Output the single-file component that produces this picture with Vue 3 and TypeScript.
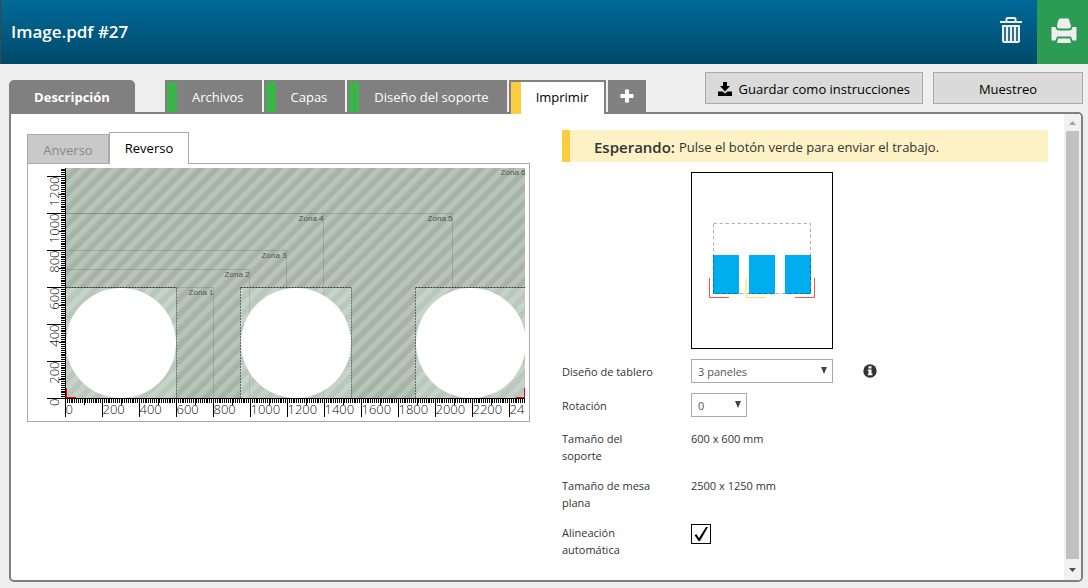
<script setup lang="ts">
import { ref } from 'vue'

type Status = 'done' | 'pending'
interface StepTab { label: string; status: Status }

const steps: StepTab[] = [
  { label: 'Archivos', status: 'done' },
  { label: 'Capas', status: 'done' },
  { label: 'Diseño del soporte', status: 'done' },
  { label: 'Imprimir', status: 'pending' },
]
const activeStep = ref('Imprimir')
const side = ref('Reverso')
const layout = ref('3 paneles')
const rotation = ref('0')
const autoAlign = ref(true)

// Bed geometry: millimetres to drawing units
const scale = 0.185
const originX = 65.5
const originY = 398.5
const px = (mm: number) => Math.floor(originX + mm * scale) + 0.5
const py = (mm: number) => Math.ceil(originY - mm * scale) - 0.5

const range = (max: number, step: number) =>
  Array.from({ length: Math.floor(max / step) + 1 }, (_, i) => i * step)
const tick = (mm: number, major: number, mid: number, minor: number) =>
  mm % 200 === 0 ? major : mm % 100 === 0 ? mid : minor

const xTicks = range(2480, 10).map(mm => `M${px(mm)} 398V${tick(mm, 417, 405, 403)}`).join('')
const yTicks = range(1240, 10).map(mm => `M66 ${py(mm)}H${tick(mm, 47, 59, 61)}`).join('')
// The last label has room for two digits only before the ruler ends
const xLabels = range(2400, 200).map(mm => ({ mm, text: mm === 2400 ? '24' : String(mm) }))
const yLabels = range(1200, 200)

const zones = [
  { name: 'Zona 1', x: 213.5, y: 287.5 },
  { name: 'Zona 2', x: 249.5, y: 269.5 },
  { name: 'Zona 3', x: 286.5, y: 250.5 },
  { name: 'Zona 4', x: 323.5, y: 213.5 },
  { name: 'Zona 5', x: 452.5, y: 213.5 },
  { name: 'Zona 6', x: 525.5, y: 167.5 },
]
const media = [65.5, 240.5, 415.5]
</script>

<template>
  <div class="app">
    <header class="topbar">
      <h1>Image.pdf #27</h1>
      <button class="icon-btn" type="button" aria-label="Eliminar">
        <svg width="24" height="28" viewBox="0 0 24 28" fill="none" stroke="#eee">
          <path d="M1 6H23" stroke-width="2" />
          <path d="M7.5 5V2.8Q7.5 2 8.5 2H15.5Q16.5 2 16.5 2.8V5" stroke-width="2" />
          <path d="M3 9H21V25Q21 27 19 27H5Q3 27 3 25Z" fill="#eee" stroke="none" />
          <path d="M6 11V25M10 11V25M14 11V25M18 11V25" stroke="#00527d" stroke-width="1.6" />
        </svg>
      </button>
      <button class="icon-btn print" type="button" aria-label="Imprimir trabajo">
        <svg width="26" height="26" viewBox="0 0 26 26" fill="#eee">
          <path d="M8.500 0.500H17.500L18.500 3L20 8Q20 10.500 18 10.500H8Q6 10.500 6 8L7 3Z" />
          <path d="M0.500 9H4.500Q5 12.500 8 12.500H18Q21 12.500 21.500 9H25.500V22.500H21.500L20 18.500H6L4.500 22.500H0.500Z" />
          <path d="M7 20.500H19L20 25H6Z" />
        </svg>
      </button>
    </header>

    <div class="toolbar">
      <nav class="tabs">
        <button class="tab overview" type="button">Descripción</button>
        <button
          v-for="s in steps" :key="s.label" type="button" class="tab step"
          :class="[s.status, { active: s.label === activeStep }]"
          @click="activeStep = s.label"
        >{{ s.label }}</button>
        <button class="tab add" type="button" aria-label="Añadir">
          <svg width="14" height="14" viewBox="0 0 14 14"><path d="M7 0.500V13.500M0.500 7H13.500" stroke="#fff" stroke-width="4" /></svg>
        </button>
      </nav>
      <div class="actions">
        <button class="action save" type="button">
          <svg width="14" height="14" viewBox="0 0 14 14"><path d="M5 0H9V4H12L7 9.500L2 4H5Z" /><path d="M0 9.500H4.500L7 11.500L9.500 9.500H14V14H0Z" /></svg>
          <span>Guardar como instrucciones</span>
        </button>
        <button class="action sample" type="button">Muestreo</button>
      </div>
    </div>

    <main class="panel">
      <div class="content">
        <section class="preview">
          <div class="side-tabs">
            <button
              v-for="s in ['Anverso', 'Reverso']" :key="s" type="button" class="side-tab"
              :class="{ active: s === side }" @click="side = s"
            >{{ s }}</button>
          </div>
          <div class="board">
            <svg viewBox="28 164 501 257" role="img" aria-label="Mesa de impresión">
              <defs>
                <pattern id="hatch" width="11" height="11" patternUnits="userSpaceOnUse" patternTransform="rotate(45)">
                  <rect width="11" height="11" fill="#a8b3a8" />
                  <rect width="5.500" height="11" fill="#b8c4b9" />
                </pattern>
                <clipPath id="bed"><rect x="65" y="168" width="460" height="231" /></clipPath>
              </defs>
              <g clip-path="url(#bed)">
                <rect x="65" y="168" width="460" height="231" fill="url(#hatch)" />
                <g v-for="z in zones" :key="z.name">
                  <path :d="`M65 ${z.y}H${z.x}V398`" fill="none" stroke="#4f5d52" stroke-opacity="0.25" />
                  <text class="zone" :x="z.x" :y="z.y + 7.500" text-anchor="end">{{ z.name }}</text>
                </g>
                <g v-for="x in media" :key="x">
                  <rect :x="x" y="287.500" width="111" height="111" fill="#e6f5ea" fill-opacity="0.3" />
                  <path :d="`M${x} 398V287.500M${x + 111} 287.500V398`" stroke="#444" stroke-opacity="0.7" stroke-dasharray="2 1" />
                  <path :d="`M${x} 287.500H${x + 111}`" stroke="#333" stroke-dasharray="2 1" />
                  <circle :cx="x + 55.500" cy="343" r="55" fill="#fff" />
                </g>
                <path d="M66.500 388V397.500H76M524.500 388V397.500H516" fill="none" stroke="#f00" />
              </g>
              <path d="M65.500 168V399M65 398.500H525" stroke="#000" />
              <path :d="xTicks" stroke="#000" />
              <path :d="yTicks" stroke="#000" />
              <text v-for="l in xLabels" :key="l.mm" class="scale" :x="px(l.mm)" y="414">{{ l.text }}</text>
              <text
                v-for="v in yLabels" :key="v" class="scale" text-anchor="end"
                :transform="`translate(59 ${py(v)}) rotate(-90)`"
              >{{ v }}</text>
            </svg>
          </div>
        </section>

        <section class="settings">
          <p class="notice"><strong>Esperando:</strong> Pulse el botón verde para enviar el trabajo.</p>
          <svg class="sheet" width="142" height="177" viewBox="0 0 142 177" fill="none" role="img" aria-label="Diseño de 3 paneles">
            <rect x="0.500" y="0.500" width="141" height="176" stroke="#000" fill="#fff" />
            <path d="M22 83H48V122H22ZM58 83H84V122H58ZM94 83H120V122H94Z" fill="#00aeef" />
            <rect x="22.500" y="51.500" width="97" height="70" stroke="#000" stroke-opacity="0.3" stroke-dasharray="3.500 2.500" />
            <path d="M18.500 106V125.500H38M104 125.500H123.500V106" stroke="#ff5050" />
            <path d="M55 106V125" stroke="#ffe9a0" stroke-width="2" />
            <path d="M55 125.500H75" stroke="#ffd966" />
          </svg>
          <div class="fields">
            <div class="row">
              <label for="layout">Diseño de tablero</label>
              <span class="select wide"><select id="layout" v-model="layout"><option>3 paneles</option></select></span>
              <svg class="info" width="14" height="14" viewBox="0 0 14 14"><circle cx="7" cy="7" r="6.700" fill="#333" /><path d="M5.500 2.300H8.500V4.600H5.500ZM4.800 5.600H8.500V9.600H9.400V11.200H4.800V9.600H5.700V7.200H4.800Z" fill="#fff" /></svg>
            </div>
            <div class="row">
              <label for="rotation">Rotación</label>
              <span class="select"><select id="rotation" v-model="rotation"><option>0</option><option>90</option></select></span>
            </div>
          </div>
          <div class="fields facts">
            <div class="row"><span class="name">Tamaño del soporte</span><span>600 x 600 mm</span></div>
            <div class="row"><span class="name">Tamaño de mesa plana</span><span>2500 x 1250 mm</span></div>
            <div class="row">
              <label for="align">Alineación automática</label>
              <span class="check">
                <input id="align" v-model="autoAlign" type="checkbox">
                <svg v-if="autoAlign" width="20" height="20" viewBox="0 0 20 20"><path d="M3.500 11L5.500 10.200L8 14L15 3H17L9 17H7.500Z" /></svg>
              </span>
            </div>
          </div>
        </section>
      </div>
      <div class="scrollbar" aria-hidden="true">
        <svg width="17" height="17" viewBox="0 0 17 17"><path d="M5 11L8.500 7L12 11Z" fill="#a3a3a3" /></svg>
        <div class="thumb"></div>
        <svg width="17" height="17" viewBox="0 0 17 17"><path d="M5 5L8.500 9L12 5Z" fill="#505050" /></svg>
      </div>
    </main>
  </div>
</template>

<style>
body { margin: 0; background: #eee; }
</style>

<style scoped>
* { box-sizing: border-box; }
.app {
  display: flex;
  flex-direction: column;
  min-height: 100vh;
  padding-bottom: 6px;
  font-family: "Open Sans", "Noto Sans", sans-serif;
  font-size: 13px;
  color: #333;
  background: #eee;
}
button, select { font: inherit; }
button { margin: 0; padding: 0; border: 0; cursor: pointer; }

.topbar {
  display: flex;
  height: 64px;
  border-left: 1px solid #444;
  background: linear-gradient(#006a99, #004a6b);
}
h1 {
  flex: 1;
  margin: 0;
  padding-left: 10px;
  font-size: 17px;
  font-weight: 600;
  line-height: 64px;
  color: #fff;
}
.icon-btn {
  display: flex;
  align-items: center;
  justify-content: center;
  width: 52px;
  padding-bottom: 4px;
  background: none;
}
.print { width: 51px; padding: 0 0 2px 2px; background: #2c9c54; }

.toolbar {
  display: flex;
  align-items: flex-end;
  justify-content: space-between;
  padding: 0 5px 0 9px;
}
.tabs { display: flex; gap: 2px; padding-top: 16px; }
.tab { height: 32px; color: #fff; background: #808080; }
.overview { margin-right: 28px; width: 126px; padding: 2px 0 0; font-weight: 700; border-radius: 5px 5px 0 0; }
.step {
  display: flex;
  align-items: center;
  position: relative;
  padding: 0 16px 0 0;
  border: 2px solid #808080;
  border-bottom: 0;
}
.step::before { content: ""; width: 10px; height: 30px; margin-right: 15px; background: #3bb54a; }
.step.pending::before { height: 32px; background: #fbcd3f; }
.step.active { height: 34px; margin-bottom: -2px; padding: 0 15px 2px 0; color: #000; background: #fff; z-index: 1; }
.step.active::before { align-self: flex-start; flex: none; }
.add { display: flex; align-items: center; justify-content: center; width: 38px; }
.actions { display: flex; gap: 10px; padding-bottom: 8px; }
.action {
  display: flex;
  align-items: center;
  justify-content: center;
  gap: 6px;
  height: 32px;
  padding: 2px 12px 0;
  color: #000;
  background: #dadada;
  border: 1px solid #aaa;
}
.sample { width: 150px; }

.panel {
  flex: 1;
  display: flex;
  margin: 0 5px 0 9px;
  border: 2px solid #808080;
  border-radius: 0 5px 5px 5px;
  background: #fff;
}
.content {
  flex: 1;
  display: grid;
  grid-template-columns: 503px minmax(0, 1fr);
  column-gap: 32px;
  align-items: start;
  padding: 16px;
}
.preview { padding-top: 2px; }
.side-tabs { display: flex; align-items: flex-end; }
.side-tab {
  height: 29px;
  width: 82px;
  padding-top: 2px;
  color: #888;
  background: #c9c9c9;
  border: 1px solid #aaa;
  border-bottom: 0;
}
.side-tab.active {
  position: relative;
  width: 80px;
  height: 32px;
  margin-bottom: -1px;
  padding: 0 0 2px;
  color: #000;
  background: #fff;
}
.board { border: 1px solid #aaa; }
.board svg { display: block; width: 100%; }
.zone { font: 8px "Liberation Sans", sans-serif; fill: #4a554c; }
.scale { font-size: 13px; font-weight: 300; fill: #111; }

.notice {
  display: flex;
  align-items: center;
  gap: 4px;
  min-height: 32px;
  margin: 0 0 10px;
  padding: 2px 8px 0 24px;
  border-left: 8px solid #fbcd3f;
  background: #fdf1c6;
}
.notice strong { font-size: 15px; font-weight: 600; }
.sheet { display: block; margin-left: 129px; }
.fields { display: flex; flex-direction: column; gap: 10px; margin-top: 10px; font-size: 11px; line-height: 17px; }
.facts { gap: 13px; margin-top: 13px; }
.row { display: flex; align-items: center; }
.facts .row { align-items: flex-start; }
.row label, .name { width: 99px; margin-right: 30px; }
.select { position: relative; display: block; width: 56px; }
.select.wide { width: 142px; }
.select::after {
  content: "";
  position: absolute;
  right: 6px;
  top: 8px;
  border: 3px solid transparent;
  border-top: 7px solid #444;
  border-bottom: 0;
  pointer-events: none;
}
select {
  display: block;
  width: 100%;
  height: 24px;
  padding: 0 6px;
  appearance: none;
  color: #555;
  background: #fff;
  border: 1px solid #aaa;
  border-radius: 0;
}
.info { margin-left: 30px; }
.check { position: relative; display: block; height: 20px; }
.check input { display: block; width: 20px; height: 20px; margin: 0; appearance: none; border: 1px solid #000; background: #fff; }
.check svg { position: absolute; inset: 0; pointer-events: none; }

.scrollbar { display: flex; flex-direction: column; width: 17px; background: #f1f1f1; border-radius: 0 3px 3px 0; }
.thumb { flex: 1; margin: 0 2px 4px; background: #c1c1c1; }
</style>
